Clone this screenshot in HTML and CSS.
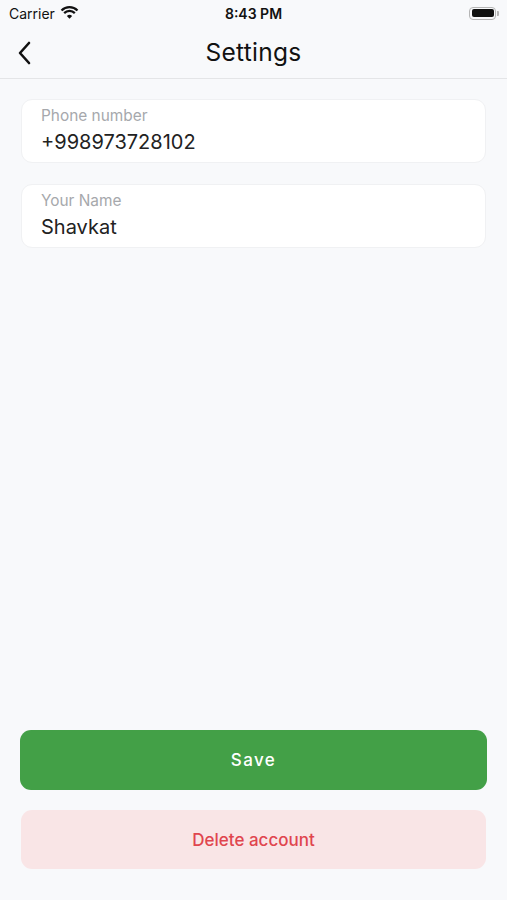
FILE: index.html
```html
<!DOCTYPE html>
<html>
<head>
<meta charset="utf-8">
<link rel="stylesheet" href="styles.css">
</head>
<body>
<div class="screen">
  <div class="status">
    <div class="status-left">
      <span class="carrier">Carrier</span>
      <svg class="wifi" width="19" height="14" viewBox="0 -1 17 13">
        <path d="M8.5 11.8 L6.03 9.33 A3.5 3.5 0 0 1 10.97 9.33 Z" fill="#111"/>
        <path d="M3.55 6.55 A7 7 0 0 1 13.45 6.55" fill="none" stroke="#111" stroke-width="2.1"/>
        <path d="M1.08 4.08 A10.5 10.5 0 0 1 15.92 4.08" fill="none" stroke="#111" stroke-width="2.1"/>
      </svg>
    </div>
    <span class="time">8:43 PM</span>
    <div class="battery">
      <div class="battery-body"><div class="battery-fill"></div></div>
      <div class="battery-cap"></div>
    </div>
  </div>
  <div class="navbar">
    <svg class="back" width="14" height="24" viewBox="0 0 14 24">
      <path d="M12 2 L3 12 L12 22" fill="none" stroke="#111" stroke-width="2.6" stroke-linecap="round" stroke-linejoin="round"/>
    </svg>
    <span class="title">Settings</span>
  </div>
  <div class="content">
    <div class="field">
      <span class="label">Phone number</span>
      <span class="value">+998973728102</span>
    </div>
    <div class="field">
      <span class="label">Your Name</span>
      <span class="value">Shavkat</span>
    </div>
    <div class="spacer"></div>
    <button class="btn btn-save">Save</button>
    <button class="btn btn-delete">Delete account</button>
  </div>
</div>
</body>
</html>
```
FILE: styles.css
```css
* { box-sizing: border-box; }
html, body { margin: 0; padding: 0; }
body {
  background: #f8f9fb;
  font-family: Inter, "Noto Sans", sans-serif;
  color: #1a1a1a;
}
.screen {
  width: 507px;
  height: 900px;
  display: flex;
  flex-direction: column;
}
.status {
  height: 28px;
  display: flex;
  align-items: center;
  justify-content: space-between;
  padding: 0 8px 2px 9px;
  position: relative;
}
.status-left { display: flex; align-items: center; gap: 5px; }
.carrier { font-size: 14px; color: #111; font-weight: 400; }
.wifi { margin-top: -3px; }
.time {
  position: absolute;
  left: 0; right: 0;
  text-align: center;
  font-size: 14px;
  font-weight: 600;
  color: #111;
  pointer-events: none;
}
.battery { display: flex; align-items: center; gap: 1px; }
.battery-body {
  width: 27px; height: 13px;
  border: 1px solid #b5b5b5;
  border-radius: 4px;
  padding: 1.5px;
}
.battery-fill { width: 100%; height: 100%; background: #111; border-radius: 2px; }
.battery-cap { width: 2px; height: 5px; background: #b5b5b5; border-radius: 0 1px 1px 0; }
.navbar {
  height: 51px;
  display: flex;
  align-items: center;
  justify-content: center;
  position: relative;
  border-bottom: 1px solid #e4e5e7;
}
.back { position: absolute; left: 17px; top: 13px; }
.title { font-size: 24.5px; font-weight: 400; color: #111; margin-top: -3px; letter-spacing: 0.3px; }
.content {
  flex: 1;
  display: flex;
  flex-direction: column;
  padding: 20px 20px 31px 20px;
}
.field {
  background: #fff;
  border-radius: 11px;
  border: 1px solid #f0f1f3;
  margin: 0 1px 21px 1px;
  height: 64px;
  display: flex;
  flex-direction: column;
  padding: 7px 19px 0 19px;
}
.label { font-size: 15.4px; color: #a6a8ac; line-height: 18px; }
.value { font-size: 20px; color: #222; line-height: 24px; margin-top: 5px; }
.spacer { flex: 1; }
.btn {
  border: none;
  border-radius: 11px;
  font-family: Inter, "Noto Sans", sans-serif;
  font-size: 17px;
  display: flex;
  align-items: center;
  justify-content: center;
  width: 100%;
}
.btn-save {
  height: 60px;
  background: #43a047;
  color: #fff;
  font-weight: 500;
  letter-spacing: 1.4px;
  margin-bottom: 20px;
}
.btn-delete {
  height: 59px;
  background: #f9e5e6;
  color: #e0454e;
  font-weight: 500;
  margin: 0 1px;
  width: auto;
}
```
